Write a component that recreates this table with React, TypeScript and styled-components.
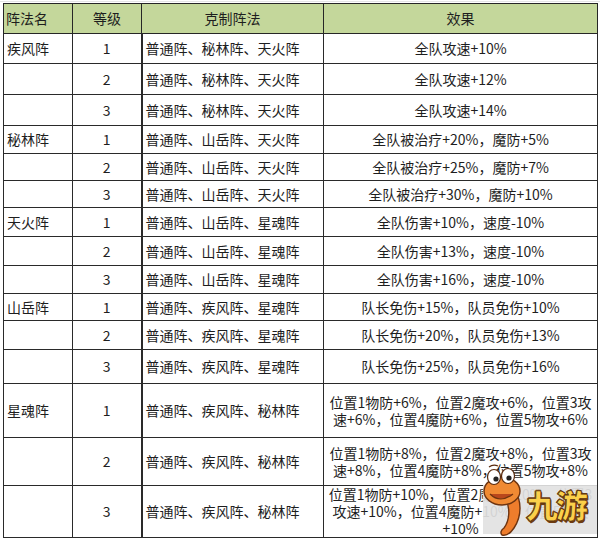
import React from "react";
import styled, { createGlobalStyle } from "styled-components";

const GlobalStyle = createGlobalStyle`
  html, body {
    margin: 0;
    padding: 0;
    background: #fff;
  }
  body {
    font-family: "Noto Sans CJK SC", "Liberation Sans", sans-serif;
    color: #222;
  }
`;

const Page = styled.div`
  position: relative;
  width: 600px;
  height: 539px;
  padding: 3px 0 0 3px;
  box-sizing: border-box;
  overflow: hidden;
  background-image: linear-gradient(#e4e4e4, #e4e4e4);
  background-size: 100% 1px;
  background-repeat: no-repeat;
  background-position: 0 1px;
`;

const Table = styled.table`
  border-collapse: collapse;
  table-layout: fixed;
  width: 594px;
  font-size: 14px;
  line-height: 17px;
  background: #fff;
`;

const HeadCell = styled.th<{ $align?: string }>`
  background: #c4d79b;
  font-weight: normal;
  height: 29px;
  padding: 0 2px;
  border: 1px solid #262626;
  text-align: ${(p) => p.$align || "center"};
  vertical-align: middle;
  color: #1e1e1e;
`;

const Cell = styled.td<{ $align?: string; $thick?: boolean }>`
  padding: 0 3px;
  border: 1px solid #2a2a2a;
  border-right-width: ${(p) => (p.$thick ? "2px" : "1px")};
  text-align: ${(p) => p.$align || "left"};
  vertical-align: middle;
  white-space: nowrap;
  overflow: hidden;
  color: #1e1e1e;
`;

const Row = styled.tr<{ $h: number }>`
  height: ${(p) => p.$h}px;
`;

const Watermark = styled.div`
  position: absolute;
  left: 480px;
  top: 460px;
  width: 118px;
  height: 79px;
  pointer-events: none;
`;

const WatermarkBack = styled.div`
  position: absolute;
  left: 3px;
  top: 25px;
  width: 114px;
  height: 49px;
  background: rgba(226, 226, 226, 0.92);
`;

const Mascot = styled.svg`
  position: absolute;
  left: 0;
  top: 0;
`;

const Brand = styled.span`
  position: absolute;
  left: 46px;
  top: 23px;
  font-family: "Noto Sans CJK SC", sans-serif;
  font-weight: 900;
  font-size: 32px;
  line-height: 42px;
  letter-spacing: -2px;
  color: #fbd04a;
  -webkit-text-stroke: 0.8px #5e3410;
  text-shadow: 1px 1px 0 #6e3c12, -1px 0 0 #6e3c12, 0 -1px 0 #6e3c12, 1px 2px 0 #6e3c12;
`;

type Item = { name: string; level: string; counters: string; effect: string[]; h: number };

const rows: Item[] = [
  { name: "疾风阵", level: "1", counters: "普通阵、秘林阵、天火阵", effect: ["全队攻速+10%"], h: 30 },
  { name: "", level: "2", counters: "普通阵、秘林阵、天火阵", effect: ["全队攻速+12%"], h: 31 },
  { name: "", level: "3", counters: "普通阵、秘林阵、天火阵", effect: ["全队攻速+14%"], h: 31 },
  { name: "秘林阵", level: "1", counters: "普通阵、山岳阵、天火阵", effect: ["全队被治疗+20%，魔防+5%"], h: 28 },
  { name: "", level: "2", counters: "普通阵、山岳阵、天火阵", effect: ["全队被治疗+25%，魔防+7%"], h: 27 },
  { name: "", level: "3", counters: "普通阵、山岳阵、天火阵", effect: ["全队被治疗+30%，魔防+10%"], h: 27 },
  { name: "天火阵", level: "1", counters: "普通阵、山岳阵、星魂阵", effect: ["全队伤害+10%，速度-10%"], h: 29 },
  { name: "", level: "2", counters: "普通阵、山岳阵、星魂阵", effect: ["全队伤害+13%，速度-10%"], h: 29 },
  { name: "", level: "3", counters: "普通阵、山岳阵、星魂阵", effect: ["全队伤害+16%，速度-10%"], h: 28 },
  { name: "山岳阵", level: "1", counters: "普通阵、疾风阵、星魂阵", effect: ["队长免伤+15%，队员免伤+10%"], h: 27 },
  { name: "", level: "2", counters: "普通阵、疾风阵、星魂阵", effect: ["队长免伤+20%，队员免伤+13%"], h: 29 },
  { name: "", level: "3", counters: "普通阵、疾风阵、星魂阵", effect: ["队长免伤+25%，队员免伤+16%"], h: 34 },
  {
    name: "星魂阵",
    level: "1",
    counters: "普通阵、疾风阵、秘林阵",
    effect: ["位置1物防+6%，位置2魔攻+6%，位置3攻", "速+6%，位置4魔防+6%，位置5物攻+6%"],
    h: 54,
  },
  {
    name: "",
    level: "2",
    counters: "普通阵、疾风阵、秘林阵",
    effect: ["位置1物防+8%，位置2魔攻+8%，位置3攻", "速+8%，位置4魔防+8%，位置5物攻+8%"],
    h: 48,
  },
  {
    name: "",
    level: "3",
    counters: "普通阵、疾风阵、秘林阵",
    effect: ["位置1物防+10%，位置2魔攻+10%，位置3", "攻速+10%，位置4魔防+10%，位置5物攻", "+10%"],
    h: 50,
  },
];

// orange "9" mascot of the watermark
function MascotIcon() {
  return (
    <Mascot width="50" height="79" viewBox="0 0 50 79">
      <path
        d="M34 30 C42 40 42 56 34 68 C30 74 26 76 22 75 C20 73 21 70 24 68 C30 60 30 48 26 40 Z"
        fill="#ee7d2c"
        stroke="#6e3410"
        strokeWidth="1.4"
      />
      <ellipse cx="22" cy="31" rx="18" ry="14" fill="#f08a33" stroke="#6e3410" strokeWidth="1.4" />
      <path d="M10 34 Q20 44 33 34" fill="#b9471c" stroke="#6e3410" strokeWidth="1.2" />
      <ellipse cx="14" cy="17" rx="6.5" ry="7.5" fill="#fff" stroke="#5a2a0c" strokeWidth="1.2" />
      <ellipse cx="28" cy="16" rx="6.5" ry="7.5" fill="#fff" stroke="#5a2a0c" strokeWidth="1.2" />
      <circle cx="16" cy="19" r="2.6" fill="#222" />
      <circle cx="29" cy="18" r="2.6" fill="#222" />
      <path d="M9 7 Q13 4 18 6" fill="none" stroke="#5a2a0c" strokeWidth="1.2" />
    </Mascot>
  );
}

export default function App() {
  return (
    <>
      <GlobalStyle />
      <Page>
        <Table>
          <colgroup>
            <col style={{ width: 69 }} />
            <col style={{ width: 69 }} />
            <col style={{ width: 182 }} />
            <col style={{ width: 274 }} />
          </colgroup>
          <thead>
            <tr>
              <HeadCell $align="left">阵法名</HeadCell>
              <HeadCell>等级</HeadCell>
              <HeadCell>克制阵法</HeadCell>
              <HeadCell>效果</HeadCell>
            </tr>
          </thead>
          <tbody>
            {rows.map((r, i) => (
              <Row key={i} $h={r.h}>
                <Cell>{r.name}</Cell>
                <Cell $align="center" $thick>
                  {r.level}
                </Cell>
                <Cell>{r.counters}</Cell>
                <Cell $align="center">
                  {r.effect.map((line, j) => (
                    <div key={j}>{line}</div>
                  ))}
                </Cell>
              </Row>
            ))}
          </tbody>
        </Table>
        <Watermark>
          <WatermarkBack />
          <MascotIcon />
          <Brand>九游</Brand>
        </Watermark>
      </Page>
    </>
  );
}
